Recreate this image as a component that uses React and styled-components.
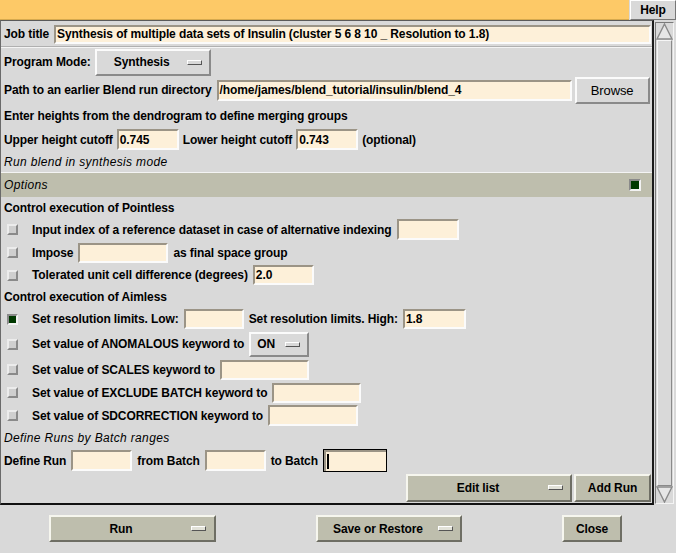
import React from 'react'
import styled, { createGlobalStyle } from 'styled-components'

const GlobalStyle = createGlobalStyle`
  html, body { margin: 0; padding: 0; background: #d9d9d9; }
  body {
    font-family: "Liberation Sans", Arial, sans-serif;
    font-size: 12px;
    font-weight: bold;
    letter-spacing: -0.1px;
    color: #000;
  }
`

const Page = styled.div`
  width: 676px;
  height: 553px;
  display: flex;
  flex-direction: column;
  overflow: hidden;
  background: #d9d9d9;
`

const TopBar = styled.div`
  display: flex;
  height: 20px;
`

const Banner = styled.div`
  width: 629px;
  box-sizing: border-box;
  background: #fdc967;
  border-bottom: 1px solid #d6a94e;
`

const HelpButton = styled.div`
  width: 46px;
  margin-left: 1px;
  box-sizing: border-box;
  display: flex;
  align-items: center;
  justify-content: center;
  background: #d9d9d9;
  border: 1px solid;
  border-color: #fff #777 #777 #fff;
`

const Body = styled.div`
  display: flex;
`

const Frame = styled.div`
  width: 654px;
  height: 485px;
  box-sizing: border-box;
  padding-top: 1px;
  border-top: 1px solid #5a5a5a;
  border-left: 1px solid #6a6a6a;
  border-right: 2px solid #1a1a1a;
  border-bottom: 2px solid #111;
  display: flex;
  flex-direction: column;
`

const Row = styled.div`
  height: ${p => p.h}px;
  flex: none;
  display: flex;
  align-items: center;
  gap: ${p => (p.gap ?? 5)}px;
  padding-left: ${p => (p.pl ?? 3)}px;
  padding-right: ${p => (p.pr ?? 1)}px;
  justify-content: ${p => p.justify || 'flex-start'};
  white-space: nowrap;
`

const Italic = styled.span`
  font-style: italic;
  font-weight: normal;
  letter-spacing: 0.35px;
`

const Separator = styled.div`
  flex: none;
  height: ${p => p.h || 1}px;
  background: #f4f4f4;
  border-top: ${p => (p.h === 2 ? '1px solid #b0b0b0' : 'none')};
  box-sizing: border-box;
`

const OptionsBar = styled.div`
  height: 24px;
  flex: none;
  display: flex;
  align-items: center;
  justify-content: space-between;
  padding: 0 11px 0 3px;
  background: #bebead;
`

const Field = styled.div`
  width: ${p => p.w}px;
  height: ${p => p.h || 21}px;
  flex: ${p => (p.grow ? 1 : 'none')};
  box-sizing: border-box;
  background: #fdf0d9;
  border: 2px solid;
  border-color: #9b9486 #fbfbfb #fbfbfb #9b9486;
  padding-left: 1px;
  display: flex;
  align-items: center;
  overflow: hidden;
`

const FocusField = styled.div`
  width: ${p => p.w}px;
  height: 23px;
  flex: none;
  box-sizing: border-box;
  border: 1px solid #000;
  display: flex;
`

const FocusInner = styled.div`
  flex: 1;
  background: #fdf0d9;
  border-top: 2px solid #9b9486;
  border-left: 2px solid #9b9486;
  display: flex;
  align-items: center;
`

const Caret = styled.div`
  width: 2px;
  height: 15px;
  background: #000;
  margin-left: 1px;
`

const Button = styled.div`
  width: ${p => p.w}px;
  height: ${p => p.h || 27}px;
  flex: none;
  box-sizing: border-box;
  background: ${p => (p.khaki ? '#bebead' : '#d9d9d9')};
  border: 2px solid;
  border-color: ${p => (p.khaki ? '#f6f6ee #6e6e64 #6e6e64 #f6f6ee' : '#fbfbfb #8a8a8a #8a8a8a #fbfbfb')};
  display: flex;
  align-items: center;
  justify-content: center;
  font-weight: ${p => (p.light ? 'normal' : 'bold')};
  font-size: ${p => (p.light ? 13 : 12)}px;
  margin-left: ${p => p.ml || 0}px;
`

const MenuButton = styled(Button)`
  justify-content: space-between;
  padding-right: ${p => p.pr || 7}px;
`

const MenuLabel = styled.span`
  flex: 1;
  text-align: ${p => (p.left ? 'left' : 'center')};
  padding-left: ${p => (p.left ? 6 : 0)}px;
`

const Indicator = styled.span`
  width: 15px;
  height: 5px;
  box-sizing: border-box;
  background: ${p => (p.khaki ? '#e2e2d8' : '#d9d9d9')};
  border: 1px solid;
  border-color: #fff #555 #555 #fff;
`

const Check = styled.span`
  width: ${p => p.size || 11}px;
  height: ${p => p.size || 11}px;
  flex: none;
  box-sizing: border-box;
  border: 2px solid;
  border-color: ${p => (p.on ? '#8a8a8a #f2f2f2 #f2f2f2 #8a8a8a' : '#ececec #8a8a8a #8a8a8a #ececec')};
  background: ${p => (p.on ? '#003800' : '#cfcfcf')};
  margin-right: ${p => (p.mr ?? 0)}px;
`

const ScrollBar = styled.div`
  width: 19px;
  height: 482px;
  margin-top: 2px;
  margin-left: 1px;
  box-sizing: border-box;
  border: 1px solid;
  border-color: #7a7a7a #f4f4f4 #f4f4f4 #7a7a7a;
  display: flex;
  flex-direction: column;
`

const Arrow = styled.div`
  height: 17px;
  flex: none;
  display: flex;
  align-items: center;
  justify-content: center;
`

const Thumb = styled.div`
  flex: 1;
  margin: 0 1px;
  border: 1px solid;
  border-color: #f6f6f6 #8a8a8a #8a8a8a #f6f6f6;
`

const Footer = styled.div`
  display: flex;
  gap: 100px;
  padding: 10px 0 0 49px;
`

const UpArrow = () => (
  <svg width="17" height="17" viewBox="0 0 17 17">
    <polygon points="8.5,1 16,16 1,16" fill="#e6e6e6" stroke="#8a8a8a" strokeWidth="1.4" />
  </svg>
)

const DownArrow = () => (
  <svg width="17" height="17" viewBox="0 0 17 17">
    <polygon points="1,1 16,1 8.5,16" fill="#e6e6e6" stroke="#8a8a8a" strokeWidth="1.4" />
  </svg>
)

const App = () => {
  return (<>
    <GlobalStyle />
    <Page>
      <TopBar>
        <Banner />
        <HelpButton>Help</HelpButton>
      </TopBar>
      <Body>
        <Frame>
          <Row h={24} gap={5}>
            <span>Job title</span>
            <Field grow h={19}>Synthesis of multiple data sets of Insulin (cluster 5 6 8 10 _ Resolution to 1.8)</Field>
          </Row>
          <Separator h={2} />
          <Row h={28} gap={4}>
            <span>Program Mode:</span>
            <MenuButton w={116} h={27}>
              <MenuLabel>Synthesis</MenuLabel>
              <Indicator />
            </MenuButton>
          </Row>
          <Row h={28} gap={5}>
            <span>Path to an earlier Blend run directory</span>
            <Field w={355} h={21}>/home/james/blend_tutorial/insulin/blend_4</Field>
            <Button w={75} h={27} light ml={-2}>Browse</Button>
          </Row>
          <Row h={24}>
            <span>Enter heights from the dendrogram to define merging groups</span>
          </Row>
          <Row h={23} gap={4}>
            <span>Upper height cutoff</span>
            <Field w={62}>0.745</Field>
            <span>Lower height cutoff</span>
            <Field w={62}>0.743</Field>
            <span>(optional)</span>
          </Row>
          <Row h={21}>
            <Italic>Run blend in synthesis mode</Italic>
          </Row>
          <Separator />
          <OptionsBar>
            <Italic>Options</Italic>
            <Check on size={12} />
          </OptionsBar>
          <Row h={21}>
            <span>Control execution of Pointless</span>
          </Row>
          <Row h={23} pl={6}>
            <Check mr={9} />
            <span>Input index of a reference dataset in case of alternative indexing</span>
            <Field w={62}></Field>
          </Row>
          <Row h={23} pl={6}>
            <Check mr={9} />
            <span>Impose</span>
            <Field w={90} h={20}></Field>
            <span>as final space group</span>
          </Row>
          <Row h={22} pl={6}>
            <Check mr={9} />
            <span>Tolerated unit cell difference (degrees)</span>
            <Field w={61} h={20}>2.0</Field>
          </Row>
          <Row h={22}>
            <span>Control execution of Aimless</span>
          </Row>
          <Row h={22} pl={6}>
            <Check on mr={9} />
            <span>Set resolution limits. Low:</span>
            <Field w={60} h={20}></Field>
            <span>Set resolution limits. High:</span>
            <Field w={63} h={20}>1.8</Field>
          </Row>
          <Row h={28} pl={6}>
            <Check mr={9} />
            <span>Set value of ANOMALOUS keyword to</span>
            <MenuButton w={60} h={25}>
              <MenuLabel left>ON</MenuLabel>
              <Indicator />
            </MenuButton>
          </Row>
          <Row h={23} pl={6}>
            <Check mr={9} />
            <span>Set value of SCALES keyword to</span>
            <Field w={89} h={20}></Field>
          </Row>
          <Row h={23} pl={6}>
            <Check mr={9} />
            <span>Set value of EXCLUDE BATCH keyword to</span>
            <Field w={89} h={20}></Field>
          </Row>
          <Row h={23} pl={6}>
            <Check mr={9} />
            <span>Set value of SDCORRECTION keyword to</span>
            <Field w={90}></Field>
          </Row>
          <Row h={22}>
            <Italic>Define Runs by Batch ranges</Italic>
          </Row>
          <Row h={23} gap={5}>
            <span>Define Run</span>
            <Field w={61}></Field>
            <span>from Batch</span>
            <Field w={61}></Field>
            <span>to Batch</span>
            <FocusField w={64}>
              <FocusInner><Caret /></FocusInner>
            </FocusField>
          </Row>
          <Row h={31} justify="flex-end" gap={2} pr={1}>
            <MenuButton khaki w={166} h={28}>
              <MenuLabel>Edit list</MenuLabel>
              <Indicator khaki />
            </MenuButton>
            <Button khaki w={77} h={28}>Add Run</Button>
          </Row>
        </Frame>
        <ScrollBar>
          <Arrow><UpArrow /></Arrow>
          <Thumb />
          <Arrow><DownArrow /></Arrow>
        </ScrollBar>
      </Body>
      <Footer>
        <MenuButton khaki w={167} pr={8}>
          <MenuLabel>Run</MenuLabel>
          <Indicator khaki />
        </MenuButton>
        <MenuButton khaki w={146}>
          <MenuLabel>Save or Restore</MenuLabel>
          <Indicator khaki />
        </MenuButton>
        <Button khaki w={60}>Close</Button>
      </Footer>
    </Page>
  </>)
}

export default App
